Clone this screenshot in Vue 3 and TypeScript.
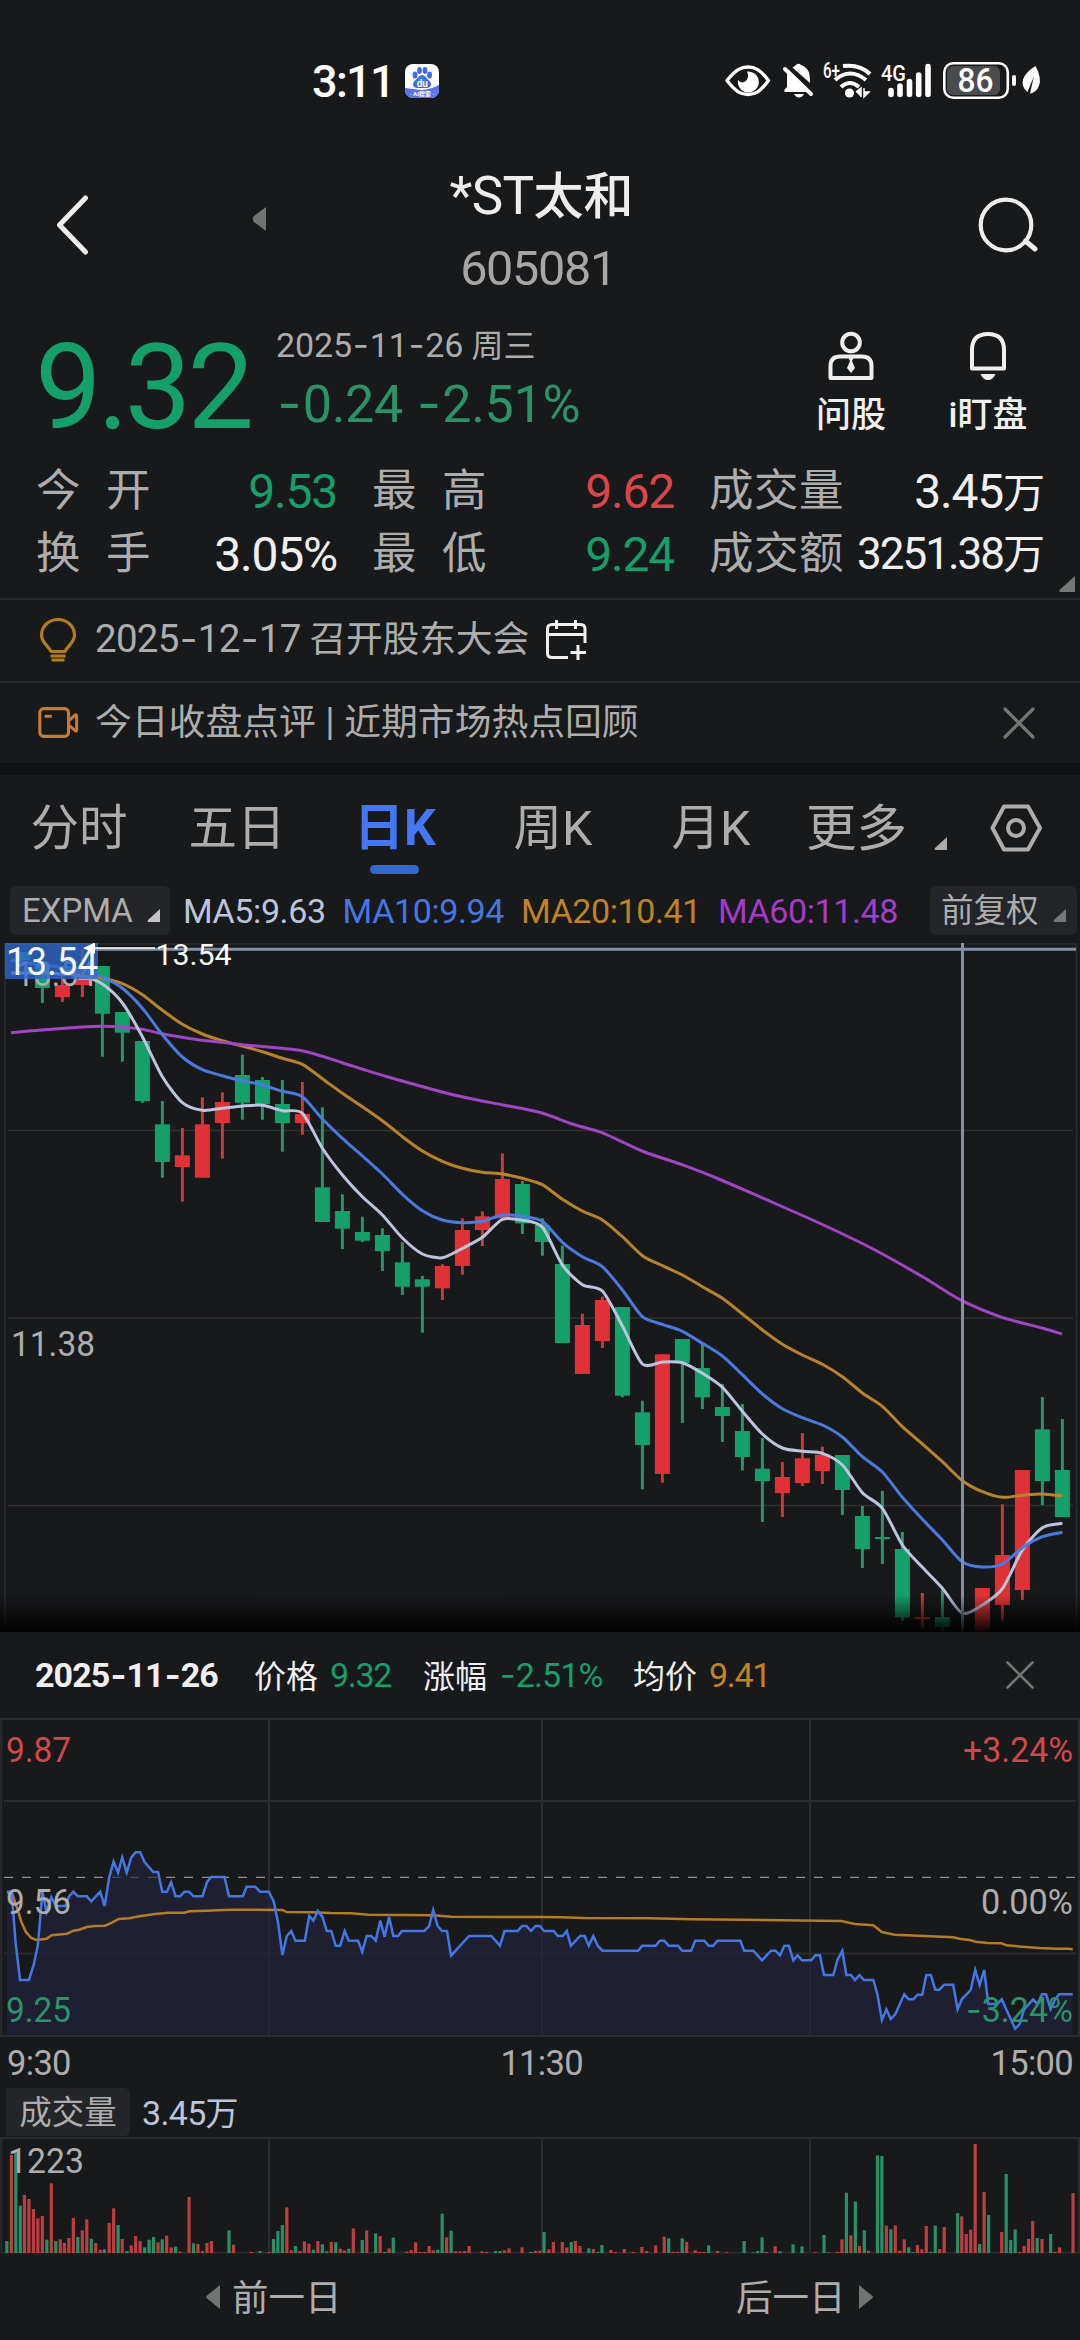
<script setup lang="ts">
type Tone = 'up' | 'down' | 'plain'
type Point = [number, number]
// [tone, open/close top, open/close bottom, high, low]
type Candle = ['r' | 'g', number, number, number, number]

const stats: { label: string[]; value: string; unit?: string; tone: Tone; small?: boolean }[] = [
  { label: ['今', '开'], value: '9.53', tone: 'down' },
  { label: ['最', '高'], value: '9.62', tone: 'up' },
  { label: ['成交量'], value: '3.45', unit: '万', tone: 'plain' },
  { label: ['换', '手'], value: '3.05%', tone: 'plain' },
  { label: ['最', '低'], value: '9.24', tone: 'down' },
  { label: ['成交额'], value: '3251.38', unit: '万', tone: 'plain', small: true },
]

const tabs = ['分时', '五日', '日K', '周K', '月K']
const activeTab = '日K'

const averages = [
  { text: 'MA5:9.63', cls: 'ma5' },
  { text: 'MA10:9.94', cls: 'ma10' },
  { text: 'MA20:10.41', cls: 'ma20' },
  { text: 'MA60:11.48', cls: 'ma60' },
]

const candles: (Candle | null)[] = [
  ['g', 952, 960, 952, 960], ['g', 966, 988, 966, 1003], ['r', 985, 997, 974, 1002], ['r', 970, 985, 950, 997],
  ['g', 966, 1013.7, 966, 1056.7], ['g', 1012, 1032.7, 1012, 1061.7], ['g', 1041, 1101, 1041, 1102.7],
  ['g', 1124.3, 1162, 1101, 1177.7], ['r', 1155.3, 1167, 1128, 1201.7], ['r', 1124.3, 1177.7, 1097.3, 1177.7],
  ['r', 1102, 1123, 1092.3, 1158.7], ['g', 1075, 1102.7, 1054.7, 1119.7], ['g', 1080, 1104.3, 1077, 1119.7],
  ['g', 1104, 1123, 1080, 1151.7], ['r', 1114, 1123, 1082, 1134.7], ['g', 1187.3, 1222, 1107.3, 1222],
  ['g', 1211, 1228.7, 1194.3, 1249], ['g', 1232, 1240.7, 1216.7, 1242], ['g', 1235, 1251, 1228.3, 1271],
  ['g', 1262.3, 1286.7, 1242.3, 1295], ['g', 1279.3, 1286.7, 1276, 1332.7], ['r', 1266, 1288.3, 1264.3, 1300],
  ['r', 1230, 1266, 1218.3, 1274.7], ['r', 1216.3, 1230, 1211.3, 1246], ['r', 1179, 1218.3, 1153.3, 1218.3],
  ['g', 1184, 1223.3, 1181, 1234], ['g', 1225, 1242, 1218.3, 1255.7], ['g', 1264, 1343, 1245.7, 1343],
  ['r', 1325, 1374, 1313.7, 1374], ['r', 1300, 1341, 1296.7, 1348], ['g', 1307, 1395.7, 1307, 1397.3],
  ['g', 1412.3, 1445, 1400.7, 1489.3], ['r', 1354.3, 1474, 1354.3, 1482.7], ['g', 1339, 1363, 1339, 1423],
  ['g', 1368, 1397.3, 1344, 1409], ['g', 1407, 1416, 1384, 1442], ['g', 1431, 1457, 1404, 1470.3],
  ['g', 1468.7, 1481, 1438, 1522], ['r', 1477, 1493, 1462, 1517], ['r', 1458.3, 1483, 1433, 1486],
  ['r', 1454.7, 1471, 1446.7, 1484], ['g', 1455, 1490, 1455, 1515], ['g', 1516, 1549, 1506, 1568],
  ['g', 1537, 1539, 1491, 1564], ['g', 1549, 1617.3, 1532, 1620.7], ['r', 1617, 1619, 1593, 1628],
  ['g', 1617, 1627, 1590, 1631], null, ['r', 1588, 1634, 1588, 1634], ['r', 1555, 1605, 1504.3, 1620.7],
  ['r', 1470, 1590, 1470, 1600], ['g', 1429.3, 1481, 1397, 1505], ['g', 1470, 1517, 1419, 1517],
]

const candleX = (i: number) => 22.4 + i * 20

const ma5 = [973, 973, 974, 976, 984, 1003, 1036.7, 1076.7, 1102.7, 1110.3, 1108.3, 1106, 1105.3, 1110.7, 1113.3, 1148.3, 1175,
  1196.7, 1215, 1238, 1254, 1257.7, 1248.3, 1237.3, 1219.3, 1220.3, 1227.3, 1265, 1284.7, 1291, 1326, 1364, 1362, 1362.7,
  1373.3, 1387.3, 1411.3, 1434, 1448, 1451.3, 1453.3, 1465, 1492.7, 1508.3, 1545, 1567.3, 1588.3, 1613.3, 1605, 1588.7,
  1550, 1527.7, 1523.3]
const ma10 = [960, 965, 967, 970, 977, 988.3, 1008.3, 1034.7, 1057, 1069.7, 1075.7, 1080.7, 1085, 1091.3, 1096.7, 1119, 1138.3,
  1156, 1174, 1194.3, 1210.7, 1220, 1222.7, 1221.3, 1215, 1216.3, 1221.3, 1242.3, 1256.7, 1266.7, 1290, 1316.7, 1324.3,
  1331.3, 1343.3, 1356, 1374.7, 1394, 1408.7, 1417.7, 1425, 1437, 1456.7, 1472, 1497.3, 1519.3, 1540, 1562, 1567, 1564,
  1547.7, 1536.7, 1532.3]
const ma20 = [973, 973, 974, 975, 978, 983.7, 994.7, 1010.3, 1024.3, 1034, 1040.7, 1046, 1051.7, 1058.3, 1064.3, 1078.7, 1093.3,
  1106.7, 1120.7, 1136.7, 1151, 1161.3, 1168.3, 1172.3, 1174, 1178.3, 1184.7, 1199.3, 1211, 1220, 1236.7, 1255.7, 1265.7,
  1275, 1286.7, 1298.3, 1314, 1330, 1344.3, 1355, 1364.3, 1376.7, 1393, 1406.3, 1426.7, 1444, 1461.7, 1480.7, 1491.7,
  1497.3, 1495.3, 1494, 1496]
const ma60: Point[] = [[11, 1032.7], [42, 1030], [82, 1027], [102, 1026.3], [122, 1027], [142, 1029.3], [162, 1033.7], [182, 1037.3],
  [202, 1040.3], [222, 1042.3], [242, 1044.7], [302, 1050.7], [342, 1062.7], [362, 1069], [388, 1077], [448, 1093.5],
  [482, 1101], [502, 1104.7], [542, 1113], [572, 1124], [602, 1132.7], [642, 1151], [682, 1164.7], [720, 1179.5],
  [790, 1210], [830, 1228], [875, 1250], [923, 1277], [962, 1300.7], [1002, 1317.3], [1042, 1328], [1062, 1334]]

const indexed = (ys: number[]): Point[] => ys.map((y, i) => [i === 0 ? 11 : candleX(i), y])

function smooth(points: Point[]): string {
  const k = 0.13
  let d = `M${points[0][0]},${points[0][1]}`
  for (let i = 0; i < points.length - 1; i++) {
    const a = points[Math.max(0, i - 1)]
    const b = points[i]
    const c = points[i + 1]
    const e = points[Math.min(points.length - 1, i + 2)]
    d += `C${b[0] + (c[0] - a[0]) * k},${b[1] + (c[1] - a[1]) * k} ${c[0] - (e[0] - b[0]) * k},${c[1] - (e[1] - b[1]) * k} ${c[0]},${c[1]}`
  }
  return d
}

const curves = [
  { d: smooth(indexed(ma20)), color: '#b9832b' },
  { d: smooth(ma60), color: '#a045c4' },
  { d: smooth(indexed(ma5)), color: '#bcc5dc' },
  { d: smooth(indexed(ma10)), color: '#4a7ae0' },
]

// Intraday samples are kept in plot units: one minute is 12.9 units wide.
const UNIT = 2.904
const intradayX = (u: number) => u / UNIT
const intradayY = (v: number) => 1820 + v / 3

const minutePrice = `20,215 33,215 38,270 45,365 58,480 84,480 98,435 110,375 123,215 135,275 149,232 162,258 190,258 200,230 213,215
226,229 252,229 265,244 291,215 304,258 317,172 330,125 343,158 355,112 368,158 381,113 394,97 407,97 420,126 445,156 459,156
471,215 485,215 497,186 510,229 523,229 536,215 549,215 562,229 588,229 601,186 614,171 652,171 665,229 705,229 716,200 741,200
755,215 781,215 795,245 807,305 820,405 833,348 846,333 858,362 885,362 898,288 910,302 923,273 936,290 949,333 962,333 975,377
988,377 1001,333 1013,362 1040,362 1052,395 1065,348 1078,348 1091,362 1104,302 1117,350 1130,290 1142,348 1156,348 1168,333
1232,333 1246,318 1258,270 1271,318 1284,333 1298,333 1310,407 1362,348 1427,348 1452,377 1465,333 1503,333 1516,318 1529,318
1542,333 1555,318 1568,318 1580,333 1608,333 1620,348 1634,348 1646,333 1658,377 1685,348 1698,348 1710,377 1723,348 1736,377
1749,392 1853,392 1865,377 1904,377 1916,362 1929,362 1942,377 1969,377 1981,392 2007,392 2019,362 2045,362 2058,377 2071,377
2084,362 2150,362 2161,392 2188,392 2213,421 2239,392 2252,392 2265,406 2278,377 2291,377 2304,421 2316,406 2329,421 2356,421
2368,406 2381,406 2393,465 2420,465 2432,420 2446,392 2458,465 2471,465 2483,480 2496,465 2509,480 2536,480 2548,523 2561,600
2574,568 2587,597 2600,582 2626,523 2639,538 2652,538 2665,524 2678,524 2690,465 2703,465 2716,509 2728,509 2742,494 2768,494
2781,568 2793,538 2819,510 2832,450 2845,495 2858,450 2870,552 2896,552 2909,538 2935,597 2948,626 2961,612 2974,568 3000,538
3013,552 3026,523 3038,523 3051,568 3064,538 3076,523 3115,523`
const minuteAverage = `20,217 35,220 50,265 62,305 75,335 90,353 105,360 135,356 150,346 195,341 213,332 230,329 252,321 275,318 305,317
325,308 345,297 375,295 405,289 450,282 490,278 535,278 550,274 600,272 650,270 680,269 820,270 832,276 905,277 960,279 1020,280
1070,284 1260,286 1310,290 1568,291 1628,292 1698,294 1888,295 2008,298 2158,299 2268,301 2383,302 2443,303 2483,312 2536,316
2561,336 2598,344 2668,347 2768,352 2790,357 2816,360 2833,365 2868,369 2908,370 2923,376 2968,380 3018,384 3068,386 3103,386 3115,388`

const toPolyline = (raw: string) =>
  raw.split(/\s+/).map((pair) => {
    const [u, v] = pair.split(',').map(Number)
    return `${intradayX(u).toFixed(1)},${intradayY(v).toFixed(1)}`
  }).join(' ')

const priceLine = toPolyline(minutePrice)
const averageLine = toPolyline(minuteAverage)
const priceArea = `${intradayX(20).toFixed(1)},2034.5 ${priceLine} ${intradayX(3115).toFixed(1)},2034.5`

const volumeRaw = `20,603g 33,345r 46,337g 59,497g 71,465r 84,477r 97,507r 110,535r 123,528r 136,599g 149,430r 162,603g 175,598r
187,609r 200,594r 213,534r 226,591g 239,571r 252,538r 265,596g 278,609r 291,629r 303,628g 317,549r 330,505r 343,555g 355,597r
369,633g 381,616r 394,588r 407,603r 420,622g 433,599g 446,591g 459,607r 471,598g 484,587r 497,622r 510,620g 523,635r 549,471r
562,610g 575,612r 588,633r 601,609r 614,603r 665,571g 678,614r 730,636r 755,633g 781,636r 794,597g 807,573g 820,555g 833,502r
846,631r 858,618g 871,633r 884,604r 897,611r 910,629g 923,603r 936,613g 949,634g 962,606r 975,607g 988,626r 1000,631r 1013,626g
1026,565r 1052,600g 1065,571r 1091,580g 1104,588r 1117,636g 1130,625r 1142,593g 1181,635r 1194,630r 1207,607r 1220,636r 1232,636r
1246,618r 1258,631r 1271,629g 1284,521g 1297,592r 1310,572g 1323,634r 1336,634r 1349,633r 1362,618r 1400,634r 1413,636r 1439,633g
1452,633g 1465,631r 1478,625r 1516,622r 1542,636g 1555,633r 1568,632r 1580,576g 1594,628r 1607,606r 1633,606r 1646,622r 1659,606g
1671,603r 1684,618r 1710,625g 1723,627r 1736,636g 1748,615g 1774,630r 1787,636r 1813,627r 1839,636r 1864,621r 1878,633r 1904,616r
1929,590r 1942,595g 1955,636r 1968,636r 1981,595g 1994,606r 2019,631r 2032,636r 2045,636r 2058,616g 2084,633r 2110,637r 2161,603g
2187,637g 2200,633g 2213,592g 2226,636r 2251,619r 2265,634g 2303,613g 2329,619g 2368,637r 2393,585g 2406,637r 2432,636r 2445,598r
2458,458g 2471,586r 2484,484g 2496,618r 2510,571g 2522,632r 2548,346g 2561,348g 2574,557r 2587,568g 2600,556r 2613,632r 2626,598r
2639,622g 2652,637g 2664,615r 2677,628r 2690,558r 2703,636g 2716,557g 2729,627r 2742,561r 2781,519g 2793,529r 2806,582r 2819,569r
2832,312r 2845,612g 2858,456r 2871,525g 2909,576r 2922,402g 2935,600g 2948,568g 2961,636r 2974,618r 2987,597r 2999,543r 3012,594g
3026,597r 3051,582g 3064,636r 3077,622r 3116,459r`

const volumes = volumeRaw.split(/\s+/).map((item) => {
  const [x, rest] = item.split(',')
  return { x: Number(x) / UNIT - 1.6, h: (639 - parseInt(rest)) / 3, up: rest.endsWith('r') }
})
</script>

<template>
  <main class="screen">
    <header class="status">
      <span class="clock">3:11</span>
      <svg class="app-badge" width="34" height="34" viewBox="0 0 34 34">
        <defs>
          <linearGradient id="paw" x1="0" y1="0" x2="1" y2="1">
            <stop offset="0" stop-color="#1f8df0" /><stop offset="1" stop-color="#5a4de0" />
          </linearGradient>
        </defs>
        <clipPath id="badge"><rect width="34" height="34" rx="8" /></clipPath>
        <g clip-path="url(#badge)">
          <rect width="34" height="34" fill="#fff" />
          <path d="M0 24Q8 25 17 26Q27 25 34 21V34H0Z" fill="#5b73e8" />
          <g fill="url(#paw)">
            <ellipse cx="10" cy="11" rx="2.5" ry="3.4" /><ellipse cx="14.5" cy="6.5" rx="2.4" ry="3.4" />
            <ellipse cx="20" cy="6.5" rx="2.4" ry="3.4" /><ellipse cx="24.5" cy="11" rx="2.5" ry="3.4" />
            <path d="M17 11C20 11 21 14 24 16.500C28 20 25.500 24.500 21 24H13C8.500 24.500 6 20 10 16.500C13 14 14 11 17 11Z" />
          </g>
          <text x="17.300" y="22.500" class="badge-du">du</text>
          <text x="17" y="32" class="badge-ai">· AI搜索 ·</text>
        </g>
      </svg>
      <svg class="status-icons" width="320" height="44" viewBox="722 58 320 44">
        <path d="M727 80.500C736 69.500 741 67 748 67S760 69.500 768.500 80.500C760 92 755 94.500 748 94.500S736 92 727 80.500Z" fill="none" stroke="#fff" stroke-width="3.400" stroke-linejoin="round" />
        <path d="M747 71.500A10.500 10.500 0 1 1 738 80Q741 84 745 81.500Q750 78 747 71.500Z" fill="#fff" />
        <g fill="#fff">
          <path d="M789 71L810 91V92H784.500V89.500L787 87V77Q787 73 789 71Z" />
          <path d="M792.500 67.500Q795 66 796 65Q798.500 62.500 801 65Q807 67 809 72.500Q810 76 810 83Z" />
          <path d="M794 94H804Q802 97.500 799 97.500T794 94Z" />
        </g>
        <path d="M785 69L811 94" stroke="#fff" stroke-width="4" stroke-linecap="round" />
        <text x="823" y="78" class="tiny" textLength="17" lengthAdjust="spacingAndGlyphs">6+</text>
        <g fill="none" stroke="#fff" stroke-width="4">
          <path d="M843 66Q860 64 870 74" /><path d="M835 80Q850 67 866 80" /><path d="M841 87Q850 79 859 87" />
        </g>
        <circle cx="849.500" cy="93" r="4.600" fill="#fff" />
        <path d="M856 92L861 88V97M864 88V97M864 97L869 92H864Z" stroke="#fff" stroke-width="1.500" fill="#fff" />
        <text x="881" y="80.500" class="tiny" textLength="25" lengthAdjust="spacingAndGlyphs">4G</text>
        <g stroke="#fff" stroke-width="5.600" stroke-linecap="round">
          <path d="M891 90.500V94.500M900 86V94.500M909.500 81.500V94.500M918.700 75V94.500M928 66.500V94.500" />
        </g>
        <rect x="947" y="66" width="53" height="29" rx="6" fill="#4a4b4d" />
        <rect x="944.300" y="63.200" width="63.500" height="34.500" rx="9" fill="none" stroke="#fff" stroke-width="2.600" />
        <rect x="1012" y="75" width="4" height="11" rx="2" fill="#fff" />
        <text x="957.500" y="92" class="battery" textLength="36" lengthAdjust="spacingAndGlyphs">86</text>
        <path d="M1035.500 66Q1042 78 1039 86Q1036 93 1030 93.500L1034 76L1027.500 92Q1021 87 1023 79.500Q1025.500 72 1035.500 66Z" fill="#fff" />
      </svg>
    </header>

    <header class="title-bar">
      <svg width="36" height="64" viewBox="0 0 36 64"><path d="M32.500 5L6.500 32L32.500 59" fill="none" stroke="#ededed" stroke-width="5" stroke-linecap="round" stroke-linejoin="round" /></svg>
      <svg class="prev-stock" width="14" height="24" viewBox="0 0 14 24"><path d="M14 0V24L1.500 14.500Q0 12 1.500 9.500Z" fill="#727373" /></svg>
      <div class="names">
        <h1>*ST<span class="cn">太和</span></h1>
        <p>605081</p>
      </div>
      <svg class="search" width="64" height="64" viewBox="973 193 64 64"><circle cx="1005" cy="225" r="25.300" fill="none" stroke="#ededed" stroke-width="4.200" /><path d="M1024.500 241L1034 249" stroke="#ededed" stroke-width="5" stroke-linecap="round" /></svg>
    </header>

    <section class="quote">
      <div class="quote-top">
        <div class="last">9.32</div>
        <div class="quote-info">
          <div class="date">2025<i class="dash">-</i>11<i class="dash">-</i>26 <span class="cn">周三</span></div>
          <div class="change"><i class="dash">-</i>0.24 <i class="dash">-</i>2.51%</div>
        </div>
        <div class="action ask">
          <svg width="48" height="50" viewBox="826 331 48 50" fill="none" stroke="#efefef" stroke-width="4">
            <circle cx="850" cy="342.500" r="8.800" />
            <path d="M829.500 378V366Q829.500 356.500 839 356.500H861Q870.500 356.500 870.500 366V378Z" stroke-linejoin="round" />
            <path d="M847.500 358H852.500L851 361L854 368L850 373L846 368L849 361Z" fill="#efefef" stroke="none" />
          </svg>
          <span>问股</span>
        </div>
        <div class="action watch">
          <svg width="48" height="50" viewBox="963 331 48 50" fill="none" stroke="#efefef" stroke-width="4">
            <path d="M971 368.500V350Q971 334 987 334T1003 350V368.500Z" stroke-linejoin="round" />
            <path d="M979.500 374H994.500Q992 380 987 380T979.500 374Z" fill="#efefef" stroke="none" />
          </svg>
          <span>i盯盘</span>
        </div>
      </div>
      <div class="stats">
        <div v-for="s in stats" :key="s.label.join('')" class="stat">
          <span class="stat-label"><i v-for="part in s.label" :key="part">{{ part }}</i></span>
          <span class="stat-value" :class="[s.tone, { small: s.small }]">{{ s.value }}<span v-if="s.unit" class="cn">{{ s.unit }}</span></span>
        </div>
      </div>
      <svg class="expand" width="16" height="16" viewBox="0 0 16 16"><path d="M16 0V16H1Q-.5 15 1 13.500Z" fill="#757676" /></svg>
    </section>

    <section class="tip">
      <svg class="tip-icon" width="42" height="46" viewBox="35 617 42 46" fill="none" stroke="#b27d1d" stroke-width="3.200">
        <path d="M49 651.500C47.500 647 39.500 643 39.500 635A16.500 15.500 0 0 1 72.500 635C72.500 643 64.500 647 63 651.500Z" stroke-linejoin="round" />
        <path d="M48.500 656H63.500M49.500 660H62.500" />
      </svg>
      <span class="tip-text dated">2025<i class="dash">-</i>12<i class="dash">-</i>17 <span class="cn">召开股东大会</span></span>
      <svg class="calendar" width="44" height="44" viewBox="543 618 44 44" fill="none" stroke="#efefef" stroke-width="3">
        <path d="M584 643V629Q584 624.500 579.500 624.500H551Q546.500 624.500 546.500 629V653Q546.500 657.500 551 657.500H567M546.500 634.500H584M555.500 620V629M574.500 620V629M577 645V660M569.500 652.500H585" />
      </svg>
    </section>
    <section class="tip">
      <svg class="tip-icon" width="46" height="36" viewBox="36 704 46 36" fill="none" stroke="#c97a33" stroke-width="3.200">
        <rect x="40" y="707" width="30" height="29" rx="4" />
        <path d="M70 720L77 713.500Q78.500 713 78.500 715V729Q78.500 731 77 730L70 724M45 715H52.500" />
      </svg>
      <span class="tip-text"><span class="cn">今日收盘点评</span> | <span class="cn">近期市场热点回顾</span></span>
      <svg class="close" width="32" height="32" viewBox="0 0 32 32"><path d="M2 2L30 30M30 2L2 30" stroke="#747575" stroke-width="3.200" stroke-linecap="round" /></svg>
    </section>
    <div class="band"></div>

    <nav class="tabs">
      <div v-for="t in tabs" :key="t" class="tab" :class="{ active: t === activeTab }">{{ t }}</div>
      <div class="more">更多<svg width="13" height="13" viewBox="0 0 13 13"><path d="M13 0V13H1Q0 12 1 11Z" fill="#adadad" /></svg></div>
      <svg class="settings" width="52" height="48" viewBox="0 0 52 48" fill="none" stroke="#adadad" stroke-width="4"><path d="M14 2.500H38L50 24L38 45.500H14L2.500 24Z" stroke-linejoin="round" /><circle cx="26" cy="24" r="8" /></svg>
    </nav>

    <div class="indicators">
      <div class="chip">EXPMA<svg width="13" height="13" viewBox="0 0 13 13"><path d="M13 0V13H1Q0 12 1 11Z" fill="#c4c4c4" /></svg></div>
      <span v-for="m in averages" :key="m.text" class="ma" :class="m.cls">{{ m.text }}</span>
      <div class="chip adjust"><span class="cn">前复权</span><svg width="13" height="13" viewBox="0 0 13 13"><path d="M13 0V13H1Q0 12 1 11Z" fill="#77787a" /></svg></div>
    </div>

    <svg class="plot" width="1080" height="689" viewBox="0 943 1080 689">
      <defs>
        <linearGradient id="fade" x1="0" y1="0" x2="0" y2="1">
          <stop offset="0" stop-color="#000" stop-opacity="0" /><stop offset="1" stop-color="#000" stop-opacity="0.95" />
        </linearGradient>
      </defs>
      <g stroke="#2b2c2f" stroke-width="1.500">
        <path d="M5 944H1076.500M5 943V1632M1076.500 943V1632" />
        <path d="M8 1130.500H1073M8 1318H1073M8 1505.500H1073" stroke="#303133" />
      </g>
      <template v-for="(c, i) in candles" :key="i">
        <g v-if="c">
          <rect :x="candleX(i) - 1.500" :y="c[3]" width="3" :height="c[4] - c[3]" :fill="c[0] === 'r' ? '#c73a3d' : '#2a9468'" />
          <rect :x="candleX(i) - 7.500" :y="c[1]" width="15" :height="c[2] - c[1]" :fill="c[0] === 'r' ? '#e03236' : '#159f6b'" />
        </g>
      </template>
      <path v-for="c in curves" :key="c.color" :d="c.d" fill="none" :stroke="c.color" stroke-width="3" stroke-linecap="butt" />
      <text x="16" y="986" class="axis" textLength="80" lengthAdjust="spacingAndGlyphs">13.54</text>
      <text x="11" y="1355.500" class="axis" textLength="84" lengthAdjust="spacingAndGlyphs">11.38</text>
      <rect x="5" y="943" width="93" height="36" fill="#3068cf" fill-opacity="0.780" />
      <text x="6" y="974.500" class="cursor-price" textLength="92" lengthAdjust="spacingAndGlyphs">13.54</text>
      <path d="M95 949.200H1076" stroke="#858fa5" stroke-width="3" />
      <path d="M88 948H155" stroke="#fff" stroke-width="1.500" />
      <path d="M83 948L95 942.500V954Z" fill="#fff" />
      <text x="155.500" y="965" class="peak" textLength="76" lengthAdjust="spacingAndGlyphs">13.54</text>
      <path d="M962.500 943V1632" stroke="#858fa5" stroke-width="3" />
      <rect x="0" y="1595" width="1080" height="37" fill="url(#fade)" />
    </svg>

    <section class="day-head">
      <b>2025<i class="dash">-</i>11<i class="dash">-</i>26</b>
      <span class="pair price"><span class="cn">价格</span><em class="down">9.32</em></span>
      <span class="pair pct"><span class="cn">涨幅</span><em class="down"><i class="dash">-</i>2.51%</em></span>
      <span class="pair avg"><span class="cn">均价</span><em class="gold">9.41</em></span>
      <svg class="close day-close" width="28" height="28" viewBox="0 0 28 28"><path d="M1.500 1.500L26.500 26.500M26.500 1.500L1.500 26.500" stroke="#747575" stroke-width="2.600" stroke-linecap="round" /></svg>
    </section>

    <svg class="plot" width="1080" height="320" viewBox="0 1718 1080 320">
      <path d="M0 1719H1080M1.300 1719V2036M1079 1719V2036M0 2036H1080M4 1801H1076M4 1953.500H1076M269 1719V2036M542 1719V2036M810 1719V2036" stroke="#2a2b2e" stroke-width="2" />
      <path d="M4 1877.300H1076" stroke="#8d90a4" stroke-width="1.200" stroke-dasharray="9 9" />
      <polygon :points="priceArea" fill="#23223f" fill-opacity="0.640" />
      <polyline :points="averageLine" fill="none" stroke="#b47c25" stroke-width="2.500" />
      <polyline :points="priceLine" fill="none" stroke="#4577e4" stroke-width="2.500" />
      <text x="6" y="1762" class="axis up" textLength="65" lengthAdjust="spacingAndGlyphs">9.87</text>
      <text x="6" y="1914" class="axis" textLength="65" lengthAdjust="spacingAndGlyphs">9.56</text>
      <text x="6" y="2022" class="axis down" textLength="65" lengthAdjust="spacingAndGlyphs">9.25</text>
      <text x="963" y="1762" class="axis up" textLength="110" lengthAdjust="spacingAndGlyphs">+3.24%</text>
      <text x="981" y="1914" class="axis" textLength="92" lengthAdjust="spacingAndGlyphs">0.00%</text>
      <text x="966" y="2022" class="axis down" textLength="107" lengthAdjust="spacingAndGlyphs"><tspan class="dash">-</tspan>3.24%</text>
    </svg>

    <div class="times"><span>9:30</span><span class="noon">11:30</span><span>15:00</span></div>

    <div class="volume-head">
      <span class="volume-chip">成交量</span>
      <span class="volume-value">3.45<span class="cn">万</span></span>
    </div>

    <svg class="plot" width="1080" height="117" viewBox="0 2137 1080 117">
      <path d="M0 2138H1080M1.300 2138V2253M1079 2138V2253M0 2252.500H1080M269 2138V2253M542 2138V2253M810 2138V2253" stroke="#2a2b2e" stroke-width="2" />
      <rect v-for="(v, i) in volumes" :key="i" :x="v.x" :y="2253 - v.h" width="3.200" :height="v.h" :fill="v.up ? '#bd3d40' : '#279067'" />
      <text x="8" y="2173.300" class="axis" textLength="76" lengthAdjust="spacingAndGlyphs">1223</text>
    </svg>

    <footer class="pager">
      <div class="page prev"><svg width="14" height="24" viewBox="0 0 14 24"><path d="M14 0V24L.5 13Q-.3 12 .5 11Z" fill="#727373" /></svg><span>前一日</span></div>
      <div class="page next"><span>后一日</span><svg width="14" height="24" viewBox="0 0 14 24"><path d="M0 0V24L13.500 13Q14.300 12 13.500 11Z" fill="#727373" /></svg></div>
    </footer>
  </main>
</template>

<style>
body {
  background: #18191b;
}
</style>

<style scoped>
.screen {
  width: 1080px;
  height: 2340px;
  overflow: hidden;
  background: #18191b;
  color: #adadad;
  font-family: Roboto, "Noto Sans CJK SC", sans-serif;
  letter-spacing: -0.02em;
  font-size: 34px;
  white-space: nowrap;
}
svg { display: block; flex: none; }
.cn { font-size: 32px; letter-spacing: 0; }
.dash { font-family: Inter, sans-serif; font-style: normal; margin: 0 0.03em; line-height: 1; }
.up { color: #db4548; fill: #db4548; }
.down { color: #159f6b; fill: #2a9468; }
.gold { color: #c28421; }

.status {
  display: flex;
  height: 130px;
  align-items: flex-start;
  color: #fff;
}
.clock {
  width: 80px;
  margin: 57px 13px 0 312px;
  font-size: 45px;
  line-height: 49px;
  font-weight: 500;
  letter-spacing: -1.7px;
}
.app-badge { margin-top: 64px; }
.status-icons { margin: 58px 0 0 auto; margin-right: 38px; }
.tiny { fill: #fff; font-size: 22px; font-weight: 500; letter-spacing: 0; }
.battery { fill: #fff; font-size: 33px; font-weight: 500; letter-spacing: 0; }
.badge-du { fill: #fff; font-size: 10px; font-weight: 700; text-anchor: middle; letter-spacing: 0; }
.badge-ai { fill: #fff; font-size: 6px; font-weight: 700; text-anchor: middle; letter-spacing: 0; }

.title-bar {
  display: grid;
  grid-template-columns: 36px 177px 1fr 64px;
  height: 180px;
  padding: 0 42px 0 53px;
  box-sizing: border-box;
}
.title-bar > svg { margin-top: 63px; }
.title-bar .prev-stock { margin: 77px 0 0 163px; }
.names {
  display: flex;
  flex-direction: column;
  align-items: center;
  gap: 8px;
  padding: 34px 164px 0 0;
}
h1, p { margin: 0; line-height: 64px; font-weight: 400; }
h1 { margin-left: 7px; font-size: 53px; color: #ededed; }
h1 .cn { font-size: 50px; font-weight: 500; }
p { font-size: 48.500px; color: #a6a6a6; letter-spacing: -1.300px; }

.quote { position: relative; height: 288px; }
.quote-top { display: flex; height: 150px; padding-left: 35px; align-items: flex-start; }
.last {
  width: 241px;
  color: #159f6b;
  font-size: 118.500px;
  line-height: 156px;
  letter-spacing: -4px;
}
.quote-info { width: 540px; padding-top: 15px; }
.date { font-size: 34px; line-height: 40px; letter-spacing: -0.1px; }
.change { margin-top: 11px; font-size: 52px; line-height: 56px; color: #2a9468; letter-spacing: -0.3px; }
.action {
  display: flex;
  flex-direction: column;
  align-items: center;
  gap: 15px;
  padding-top: 21px;
  color: #efefef;
  font-size: 35px;
  line-height: 40px;
  font-weight: 500;
  letter-spacing: 0;
}
.ask { width: 70px; }
.watch { width: 84px; margin-left: 60px; }
.stats {
  display: grid;
  grid-template-columns: 301px 302px 336px;
  column-gap: 35px;
  padding-left: 36px;
}
.stat { display: flex; height: 63px; justify-content: space-between; line-height: 63px; }
.stat-label { display: flex; gap: 25px; font-size: 44.500px; letter-spacing: 0.500px; }
.stat-label i { font-style: normal; }
.stat-value { font-size: 48px; letter-spacing: -1.200px; }
.stat-value .cn { font-size: 42px; }
.stat-value.plain { color: #efefef; }
.stat-value.small { font-size: 44px; letter-spacing: -2px; }
.expand { position: absolute; right: 5px; bottom: 6px; }

.tip {
  display: flex;
  align-items: center;
  height: 82.500px;
  box-sizing: border-box;
  border-top: 2px solid #27282b;
  padding: 0 45px 0 36px;
}
.tip-icon { margin-right: 15px; width: 44px; }
.tip-text { font-size: 38.500px; line-height: 50px; letter-spacing: 0; padding-bottom: 1px; }
.tip-text.dated { letter-spacing: -0.750px; }
.tip-text .cn { font-size: 36.800px; }
.tip-text.dated .cn { letter-spacing: -0.200px; }
.calendar { margin-left: 15px; }
.close { margin-left: auto; }
.band { height: 12px; background: #101113; }

.tabs { display: flex; height: 107px; padding-right: 38px; line-height: 107px; font-size: 48.500px; letter-spacing: 0; }
.tab { position: relative; width: 158px; text-align: center; }
.tab.active { color: #4577f5; font-weight: 700; font-size: 50px; }
.tab.active::after {
  content: "";
  position: absolute;
  left: 54px;
  top: 90px;
  width: 49px;
  height: 9px;
  border-radius: 5px;
  background: #3069d0;
}
.more { display: flex; align-items: flex-start; gap: 27px; margin-left: 16px; font-size: 50.500px; }
.more svg { margin-top: 62px; }
.settings { margin: 29px 0 0 auto; }

.indicators { display: flex; height: 61px; align-items: flex-start; padding: 4px 3px 0 10px; box-sizing: border-box; line-height: 49px; letter-spacing: 0; }
.chip {
  display: flex;
  width: 160px;
  height: 49px;
  box-sizing: border-box;
  padding: 0 10px 0 12px;
  justify-content: space-between;
  border-radius: 6px;
  background: #242529;
  font-size: 33px;
}
.chip svg { margin-top: 23px; }
.ma { font-size: 34px; line-height: 50px; margin-left: 17px; letter-spacing: -0.4px; }
.ma5 { margin-left: 13px; color: #bcc5dc; }
.ma10 { color: #4577e4; }
.ma20 { color: #c08322; }
.ma60 { color: #a53bca; }
.adjust { width: 147px; margin-left: auto; padding: 0 11px; line-height: 50px; }
.adjust .cn { font-size: 32.500px; }
.axis { fill: #adadad; font-size: 34.500px; letter-spacing: 0; }
.axis.up { fill: #d1484a; }
.axis.down { fill: #2a9468; }
.cursor-price { fill: #f2f5fb; font-size: 38px; letter-spacing: 0; }
.peak { fill: #fff; font-size: 30px; letter-spacing: 0; }

.day-head { display: flex; height: 86px; align-items: center; padding: 0 46px 0 35px; color: #efefef; }
.day-head b { width: 219px; font-size: 34px; letter-spacing: -0.9px; }
.pair { display: flex; align-items: center; }
.pair .cn { padding-bottom: 2px; }
.pair em { margin-left: 12px; font-style: normal; font-size: 34px; letter-spacing: -1.3px; }
.price { width: 169px; }
.pct { width: 210px; }
.pct em { letter-spacing: -0.9px; }

.times { display: flex; height: 50px; justify-content: space-between; padding: 0 7px; line-height: 51px; font-size: 34.500px; }
.noon { padding-left: 22px; }
.volume-head { display: flex; height: 49px; padding-left: 6px; line-height: 50px; }
.volume-chip { width: 124px; height: 48px; border-radius: 0 6px 6px 0; background: #242529; text-align: center; font-size: 32.500px; letter-spacing: 0; }
.volume-value { margin-left: 12px; color: #bcc5dc; font-size: 34px; }
.volume-value .cn { font-size: 33px; }
.pager { display: grid; grid-template-columns: 1fr 1fr; height: 86px; }
.page { display: flex; align-items: center; gap: 12px; font-size: 36.500px; letter-spacing: 0; }
.page span { padding-bottom: 3px; }
.prev { padding-left: 206px; }
.next { padding-left: 196px; gap: 13px; }
</style>
